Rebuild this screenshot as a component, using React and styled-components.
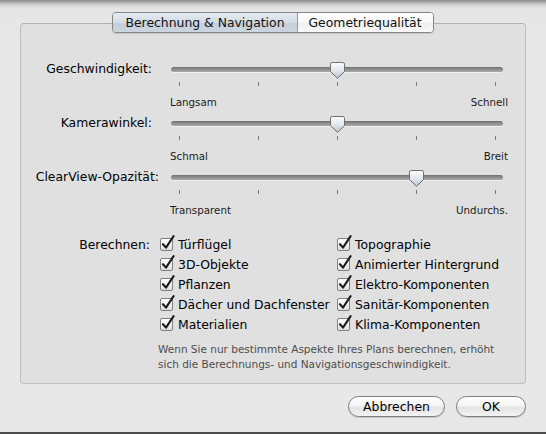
import React from "react";
import styled, { createGlobalStyle } from "styled-components";

const Global = createGlobalStyle`
  html, body { margin: 0; padding: 0; background: #e9e9e9; }
  body { font-family: "DejaVu Sans", "Liberation Sans", sans-serif; }
`;

const Sheet = styled.div`
  box-sizing: border-box;
  width: 546px;
  height: 434px;
  padding: 23px 20px 0;
  display: flex;
  flex-direction: column;
  background: linear-gradient(to bottom, #8b8b8b 0px, #a9a9a9 2px, #d4d4d4 5px, #e5e5e5 9px, #e8e8e8 40px);
  border-bottom: 2px solid #4b4b4b;
  font-size: 12.4px;
  color: #000;
`;

const GroupBox = styled.section`
  box-sizing: border-box;
  height: 361px;
  border: 1px solid #bdbdbd;
  border-top-color: #b0b0b0;
  border-radius: 4px;
  background: #e0e0e0;
  display: flex;
  flex-direction: column;
`;

const Segmented = styled.div`
  align-self: center;
  margin-top: -12px;
  display: flex;
  height: 21px;
  box-sizing: border-box;
  border: 1px solid #868686;
  border-radius: 4px;
  overflow: hidden;
  box-shadow: 0 1px 1px rgba(0, 0, 0, 0.12);
`;

const Segment = styled.div`
  display: flex;
  align-items: center;
  justify-content: center;
  padding: 0 ${(p) => p.$pad}px;
  line-height: 19px;
  font-size: 12.4px;
  color: #111;
  background: ${(p) =>
    p.$active
      ? "linear-gradient(to bottom, #e6ebf1 0%, #d3dbe4 50%, #c4ceda 51%, #ccd5df 100%)"
      : "linear-gradient(to bottom, #ffffff 0%, #f7f7f7 50%, #eeeeee 51%, #f9f9f9 100%)"};
  & + & {
    border-left: 1px solid #9a9a9a;
  }
`;

const Sliders = styled.div`
  margin-top: 27px;
  display: flex;
  flex-direction: column;
  gap: 5px;
`;

const SliderRow = styled.div`
  display: grid;
  grid-template-columns: 150px 337px;
  align-items: start;
`;

const RowLabel = styled.div`
  text-align: right;
  white-space: nowrap;
  line-height: 18px;
  padding-right: ${(p) => p.$gap}px;
`;

const Control = styled.div`
  display: flex;
  flex-direction: column;
`;

const TrackArea = styled.div`
  position: relative;
  height: 18px;
  width: 332px;
  display: flex;
  align-items: center;
`;

const Track = styled.div`
  width: 100%;
  height: 5px;
  border-radius: 3px;
  background: linear-gradient(to bottom, #6f6f6f 0%, #8e8e8e 45%, #a9a9a9 100%);
  box-shadow: 0 1px 0 rgba(255, 255, 255, 0.5);
`;

const Thumb = styled.svg`
  position: absolute;
  top: 2px;
  width: 15px;
  height: 17px;
`;

const Ticks = styled.div`
  width: 332px;
  box-sizing: border-box;
  margin-top: 4px;
  height: 4px;
  padding: 0 7px 0 8px;
  display: flex;
  justify-content: space-between;
`;

const Tick = styled.span`
  width: 1px;
  height: 4px;
  background: #7a7a7a;
`;

const EndLabels = styled.div`
  margin-top: 10px;
  margin-left: -1px;
  display: flex;
  justify-content: space-between;
  font-size: 10.3px;
  line-height: 13px;
  color: #1b1b1b;
`;

const CheckGrid = styled.div`
  margin-top: 17px;
  display: grid;
  grid-template-columns: 139px 177px 1fr;
  grid-auto-rows: 20px;
  align-items: center;
`;

const CheckCaption = styled.div`
  text-align: right;
  padding-right: 10px;
  white-space: nowrap;
`;

const CheckItem = styled.label`
  display: flex;
  align-items: center;
  gap: 3px;
  white-space: nowrap;
`;

const Box = styled.svg`
  width: 15px;
  height: 16px;
  flex: none;
  margin-top: -2px;
`;

const Help = styled.p`
  margin: 8px 0 0 137px;
  font-size: 10.5px;
  line-height: 15px;
  color: #4e4e4e;
  white-space: nowrap;
`;

const Buttons = styled.div`
  margin-top: 12px;
  display: flex;
  justify-content: flex-end;
  gap: 11px;
`;

const PushButton = styled.button`
  box-sizing: border-box;
  height: 21px;
  width: ${(p) => p.$w}px;
  border: 1px solid #7e7e7e;
  border-radius: 11px;
  padding: 0;
  font-family: inherit;
  font-size: 12.4px;
  color: #000;
  background: linear-gradient(to bottom, #ffffff 0%, #f4f4f4 45%, #e4e4e4 55%, #f3f3f3 100%);
  box-shadow: 0 1px 1px rgba(0, 0, 0, 0.15);
`;

function SliderThumb({ left }) {
  return (
    <Thumb viewBox="0 0 15 17" style={{ left }}>
      <defs>
        <linearGradient id="thumbFill" x1="0" y1="0" x2="0" y2="1">
          <stop offset="0" stopColor="#fdfdfe" />
          <stop offset="0.5" stopColor="#e3e8ee" />
          <stop offset="1" stopColor="#b9c3cf" />
        </linearGradient>
      </defs>
      <path
        d="M2.2 0.5 H12.8 Q14.5 0.5 14.5 2.2 V9.6 L7.5 16.3 L0.5 9.6 V2.2 Q0.5 0.5 2.2 0.5 Z"
        fill="url(#thumbFill)"
        stroke="#6e6e6e"
        strokeWidth="1"
      />
    </Thumb>
  );
}

function Slider({ label, gap, value, min, max }) {
  // thumb centre runs from the first tick to the last one
  const centre = 8.5 + value * 316;
  return (
    <SliderRow>
      <RowLabel $gap={gap}>{label}</RowLabel>
      <Control>
        <TrackArea>
          <Track />
          <SliderThumb left={centre - 7.5} />
        </TrackArea>
        <Ticks>
          {[0, 1, 2, 3, 4].map((i) => (
            <Tick key={i} />
          ))}
        </Ticks>
        <EndLabels>
          <span>{min}</span>
          <span>{max}</span>
        </EndLabels>
      </Control>
    </SliderRow>
  );
}

function CheckBox() {
  return (
    <Box viewBox="0 0 15 16">
      <defs>
        <linearGradient id="boxFill" x1="0" y1="0" x2="0" y2="1">
          <stop offset="0" stopColor="#ffffff" />
          <stop offset="0.5" stopColor="#f1f1f1" />
          <stop offset="1" stopColor="#dcdcdc" />
        </linearGradient>
      </defs>
      <rect x="0.5" y="3.5" width="12" height="12" rx="1.5" fill="url(#boxFill)" stroke="#7f7f7f" />
      <path d="M3 9.2 L6 12.6 L13.6 1.2" fill="none" stroke="#1c1c1c" strokeWidth="2.1" strokeLinecap="round" strokeLinejoin="round" />
    </Box>
  );
}

function Check({ children }) {
  return (
    <CheckItem>
      <CheckBox />
      <span>{children}</span>
    </CheckItem>
  );
}

const sliders = [
  { label: "Geschwindigkeit:", gap: 19, value: 0.5, min: "Langsam", max: "Schnell" },
  { label: "Kamerawinkel:", gap: 19, value: 0.5, min: "Schmal", max: "Breit" },
  { label: "ClearView-Opazität:", gap: 12, value: 0.75, min: "Transparent", max: "Undurchs." },
];

const left = ["Türflügel", "3D-Objekte", "Pflanzen", "Dächer und Dachfenster", "Materialien"];
const right = ["Topographie", "Animierter Hintergrund", "Elektro-Komponenten", "Sanitär-Komponenten", "Klima-Komponenten"];

export default function App() {
  return (
    <>
      <Global />
      <Sheet>
        <GroupBox>
          <Segmented>
            <Segment $active $pad={12}>Berechnung &amp; Navigation</Segment>
            <Segment $pad={11}>Geometriequalität</Segment>
          </Segmented>
          <Sliders>
            {sliders.map((s) => (
              <Slider key={s.label} {...s} />
            ))}
          </Sliders>
          <CheckGrid>
            {left.map((item, i) => (
              <React.Fragment key={item}>
                <CheckCaption>{i === 0 ? "Berechnen:" : ""}</CheckCaption>
                <Check>{item}</Check>
                <Check>{right[i]}</Check>
              </React.Fragment>
            ))}
          </CheckGrid>
          <Help>
            Wenn Sie nur bestimmte Aspekte Ihres Plans berechnen, erhöht
            <br />
            sich die Berechnungs- und Navigationsgeschwindigkeit.
          </Help>
        </GroupBox>
        <Buttons>
          <PushButton $w={97}>Abbrechen</PushButton>
          <PushButton $w={70}>OK</PushButton>
        </Buttons>
      </Sheet>
    </>
  );
}
